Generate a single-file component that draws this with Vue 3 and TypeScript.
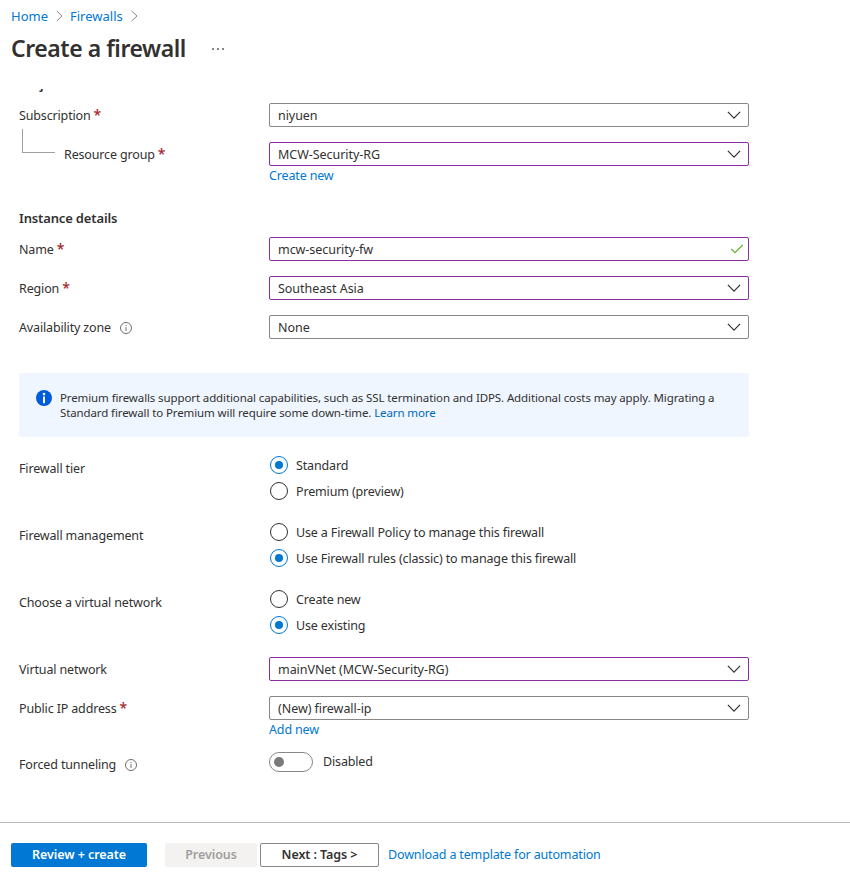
<script setup lang="ts">
import { ref } from 'vue'

interface Field {
  label: string
  value: string
  required?: boolean
  info?: boolean
  edited?: boolean
  valid?: boolean
  child?: boolean
  link?: string
}
interface Choice {
  label: string
  options: string[]
  selected: number
}

const projectFields: Field[] = [
  { label: 'Subscription', value: 'niyuen', required: true },
  { label: 'Resource group', value: 'MCW-Security-RG', required: true, edited: true, child: true, link: 'Create new' },
]
const instanceFields: Field[] = [
  { label: 'Name', value: 'mcw-security-fw', required: true, edited: true, valid: true },
  { label: 'Region', value: 'Southeast Asia', required: true, edited: true },
  { label: 'Availability zone', value: 'None', info: true },
]
const networkFields: Field[] = [
  { label: 'Virtual network', value: 'mainVNet (MCW-Security-RG)', edited: true },
  { label: 'Public IP address', value: '(New) firewall-ip', required: true, link: 'Add new' },
]
const groups = [
  { key: 'project', fields: projectFields },
  { key: 'instance', title: 'Instance details', fields: instanceFields },
]
const choices = ref<Choice[]>([
  { label: 'Firewall tier', options: ['Standard', 'Premium (preview)'], selected: 0 },
  {
    label: 'Firewall management',
    options: ['Use a Firewall Policy to manage this firewall', 'Use Firewall rules (classic) to manage this firewall'],
    selected: 1,
  },
  { label: 'Choose a virtual network', options: ['Create new', 'Use existing'], selected: 1 },
])
const tunneling = ref(false)
</script>

<template>
  <div class="page">
    <nav class="crumbs">
      <a>Home</a>
      <svg width="7" height="12" viewBox="0 0 7 12"><path d="M.7 1 6 6 .7 11" /></svg>
      <a>Firewalls</a>
      <svg width="7" height="12" viewBox="0 0 7 12"><path d="M.7 1 6 6 .7 11" /></svg>
    </nav>
    <header class="title-bar">
      <h1>Create a firewall</h1>
      <span class="more"><i /><i /><i /></span>
    </header>

    <main class="form">
      <h2 class="scrolled">Project details</h2>
      <section v-for="g in groups" :key="g.key" :class="['group', g.key]">
        <h2 v-if="g.title">{{ g.title }}</h2>
        <div v-for="f in g.fields" :key="f.label" class="row">
          <div :class="['label', { child: f.child }]">
            <span v-if="f.child" class="elbow" />
            <span>{{ f.label }}</span>
            <span v-if="f.required" class="star">*</span>
            <svg v-if="f.info" class="info" width="12" height="12" viewBox="0 0 12 12">
              <circle cx="6" cy="6" r="5.5" /><path d="M6 5.1V9M6 3v1.1" />
            </svg>
          </div>
          <div class="control">
            <div :class="['box', { edited: f.edited }]">
              <span>{{ f.value }}</span>
              <svg v-if="f.valid" class="check" width="14" height="10" viewBox="0 0 14 10"><path d="M1.3 5 5 8.7 12.7 1" /></svg>
              <svg v-else class="chevron" width="14" height="8" viewBox="0 0 14 8"><path d="M.9.9 7 7.1 13.1.9" /></svg>
            </div>
            <a v-if="f.link" class="below">{{ f.link }}</a>
          </div>
        </div>
      </section>

      <aside class="banner">
        <svg width="16" height="16" viewBox="0 0 16 16">
          <circle cx="8" cy="8" r="8" fill="#015cda" />
          <rect x="7" y="6.6" width="2" height="6.6" fill="#fff" /><circle cx="8" cy="4.1" r="1.3" fill="#fff" />
        </svg>
        <p>
          <span class="line">Premium firewalls support additional capabilities, such as SSL termination and IDPS. Additional costs may apply. Migrating a</span>
          <span class="line">Standard firewall to Premium will require some down-time. <a>Learn more</a></span>
        </p>
      </aside>

      <section class="choices">
        <div v-for="c in choices" :key="c.label" class="choice">
          <div class="label">{{ c.label }}</div>
          <div class="options">
            <div v-for="(o, i) in c.options" :key="o" class="option" @click="c.selected = i">
              <span :class="['radio', { on: c.selected === i }]" />
              <span class="option-text">{{ o }}</span>
            </div>
          </div>
        </div>
      </section>

      <section class="group network">
        <div v-for="f in networkFields" :key="f.label" class="row">
          <div class="label">
            <span>{{ f.label }}</span>
            <span v-if="f.required" class="star">*</span>
          </div>
          <div class="control">
            <div :class="['box', { edited: f.edited }]">
              <span>{{ f.value }}</span>
              <svg class="chevron" width="14" height="8" viewBox="0 0 14 8"><path d="M.9.9 7 7.1 13.1.9" /></svg>
            </div>
            <a v-if="f.link" class="below">{{ f.link }}</a>
          </div>
        </div>
      </section>

      <div class="tunnel">
        <div class="label">
          <span>Forced tunneling</span>
          <svg class="info" width="12" height="12" viewBox="0 0 12 12">
            <circle cx="6" cy="6" r="5.5" /><path d="M6 5.1V9M6 3v1.1" />
          </svg>
        </div>
        <div class="switch-wrap" @click="tunneling = !tunneling">
          <span :class="['switch', { on: tunneling }]"><i /></span>
          <span>{{ tunneling ? 'Enabled' : 'Disabled' }}</span>
        </div>
      </div>
    </main>

    <footer class="actions">
      <button class="primary">Review + create</button>
      <button class="disabled">Previous</button>
      <button class="next">Next : Tags &gt;</button>
      <a>Download a template for automation</a>
    </footer>
  </div>
</template>

<style>
body {
  margin: 0;
  background: #fff;
}
</style>

<style scoped>
* {
  box-sizing: border-box;
}
.page {
  width: 850px;
  height: 881px;
  display: flex;
  flex-direction: column;
  overflow: hidden;
  font: 12.5px/18px 'Noto Sans', 'Open Sans', sans-serif;
  letter-spacing: -0.15px;
  color: #323130;
  white-space: nowrap;
}
a {
  color: #0078d4;
}
svg {
  flex: none;
  fill: none;
}
.crumbs {
  display: flex;
  align-items: center;
  height: 32px;
  padding-left: 11px;
  font-size: 13px;
  letter-spacing: 0;
}
.crumbs svg {
  margin: 0 7px 0 8px;
  stroke: #8a8886;
}
.title-bar {
  display: flex;
  align-items: center;
  height: 34px;
  padding-left: 11px;
}
h1 {
  margin: 0;
  width: 201px;
  padding-bottom: 2px;
  font-size: 23px;
  line-height: 32px;
  font-weight: 600;
  letter-spacing: -0.45px;
}
.more {
  display: flex;
  gap: 3px;
}
.more i {
  width: 2px;
  height: 2px;
  border-radius: 1px;
  background: #605e5c;
}
.form {
  height: 733px;
  margin-top: 23px;
  padding-left: 19px;
  overflow: hidden;
}
h2 {
  margin: 0;
  font-size: 13px;
  line-height: 18px;
  font-weight: 600;
}
.scrolled {
  margin-top: -14px;
}
.group {
  display: flex;
  flex-direction: column;
  gap: 15px;
  width: 730px;
}
.project {
  margin-top: 10px;
}
.instance {
  margin-top: 24px;
}
.instance h2 {
  margin-bottom: -5px;
}
.row {
  display: flex;
  align-items: flex-start;
}
.label {
  display: flex;
  align-items: center;
  width: 250px;
  height: 24px;
  padding-top: 2px;
}
.star {
  margin: -2px 0 0 3px;
  color: #a4262c;
  font-size: 14px;
  font-weight: 500;
}
.info {
  margin: -1px 0 0 9px;
  stroke: #605e5c;
  stroke-width: 0.9;
}
.elbow {
  width: 33px;
  height: 24px;
  margin: -29px 9px 0 3px;
  border: solid #a19f9d;
  border-width: 0 0 1px 1px;
}
.control {
  width: 480px;
}
.box {
  display: flex;
  align-items: center;
  justify-content: space-between;
  height: 24px;
  padding: 0 7px 0 8px;
  border: 1px solid #8a8886;
  border-radius: 2px;
  letter-spacing: -0.05px;
}
.box span {
  padding-top: 2px;
}
.box.edited {
  border-color: #8a2da5;
}
.chevron {
  stroke: #323130;
  stroke-width: 1.2;
}
.check {
  margin-right: -3px;
  stroke: #6bb02e;
  stroke-width: 1.2;
}
.below {
  display: block;
  height: 19px;
  line-height: 19px;
}
.banner {
  display: flex;
  width: 730px;
  height: 64px;
  margin-top: 34px;
  padding: 17px 0 0 17px;
  border-radius: 2px;
  background: #eff6ff;
  font-size: 11.5px;
  line-height: 15px;
  letter-spacing: -0.113px;
}
.banner p {
  margin: 0 0 0 8px;
}
.line {
  display: block;
}
.banner a {
  color: #0067b8;
}
.choices {
  display: flex;
  flex-direction: column;
  gap: 20px;
  margin-top: 18px;
}
.choice {
  display: flex;
  height: 47px;
}
.choice .label {
  margin-top: 1px;
}
.options {
  display: flex;
  flex-direction: column;
  gap: 6px;
  padding-left: 1px;
}
.option {
  display: flex;
  align-items: center;
  gap: 8px;
  height: 20px;
}
.option-text {
  padding-top: 2px;
}
.radio {
  display: grid;
  place-items: center;
  width: 18px;
  height: 18px;
  border: 1px solid #323130;
  border-radius: 50%;
}
.radio.on {
  border-color: #0078d4;
}
.radio.on::after {
  content: '';
  width: 8px;
  height: 8px;
  border-radius: 50%;
  background: #0078d4;
}
.network {
  margin-top: 21px;
}
.tunnel {
  display: flex;
  margin-top: 13px;
}
.switch-wrap {
  display: flex;
  align-items: center;
  gap: 10px;
  height: 20px;
}
.switch {
  display: flex;
  align-items: center;
  width: 44px;
  height: 20px;
  padding: 0 4px;
  border: 1px solid #8a8886;
  border-radius: 10px;
}
.switch.on {
  justify-content: flex-end;
}
.switch i {
  width: 10px;
  height: 10px;
  border-radius: 50%;
  background: #7a7a7a;
}
.actions {
  display: flex;
  align-items: center;
  height: 59px;
  padding: 6px 0 0 11px;
  border-top: 1px solid #bebbb8;
}
button {
  height: 24px;
  padding: 0;
  border: 1px solid transparent;
  border-radius: 2px;
  font: 600 12.5px/18px 'Noto Sans', 'Open Sans', sans-serif;
  letter-spacing: -0.07px;
  color: #323130;
}
.primary {
  width: 136px;
  margin-right: 18px;
  background: #0078d4;
  color: #fff;
}
.disabled {
  width: 92px;
  margin-right: 3px;
  background: #f3f2f1;
  color: #a19f9d;
}
.next {
  width: 119px;
  margin-right: 9px;
  border-color: #8a8886;
  background: #fff;
}
</style>
